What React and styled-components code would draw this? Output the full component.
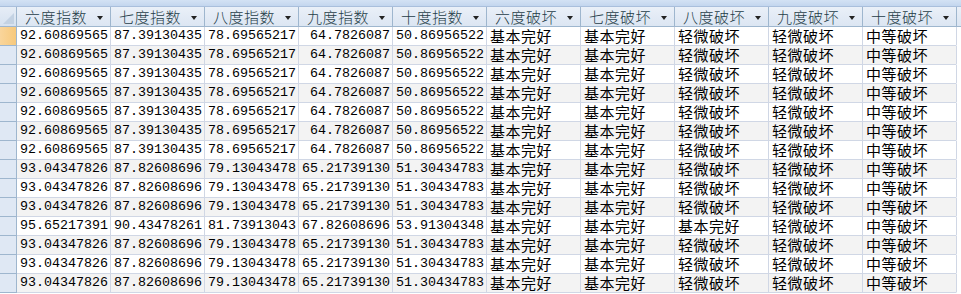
import React from "react";
import styled, { createGlobalStyle } from "styled-components";

const Global = createGlobalStyle`
  html, body { margin: 0; padding: 0; background: #ffffff; overflow: hidden; }
  #root { width: 961px; height: 294px; overflow: hidden; }
`;

const Sheet = styled.div`
  width: 961px;
  height: 294px;
  display: flex;
  flex-direction: column;
  background: #ffffff;
  overflow: hidden;
`;

const TopStrip = styled.div`
  height: 6px;
  flex: none;
  background: linear-gradient(#d3e2f4, #c3d6ee);
  border-bottom: 1px solid #a9bfdc;
`;

const Row = styled.div`
  display: flex;
  flex: none;
  height: ${(p) => (p.$head ? 20 : 19)}px;
  background: ${(p) => (p.$head ? "linear-gradient(#eaf0f8, #dbe5f2)" : p.$alt ? "#f3f3f3" : "#ffffff")};
`;

const Selector = styled.div`
  flex: none;
  position: relative;
  width: 17px;
  box-sizing: border-box;
  border-right: 1px solid #9eb6ce;
  border-bottom: 1px solid #9eb6ce;
  background: ${(p) =>
    p.$head
      ? "linear-gradient(#e6edf6, #d6e2f0)"
      : p.$active
      ? "linear-gradient(90deg, #f9d59b, #f7c97c)"
      : "#dfe8f4"};
`;

const Corner = styled.div`
  position: absolute;
  right: 2px;
  bottom: 2px;
  width: 0;
  height: 0;
  border-left: 11px solid transparent;
  border-bottom: 11px solid #c3d2e3;
`;

const HeadCell = styled.div`
  flex: none;
  width: 94px;
  box-sizing: border-box;
  border-right: 1px solid #9eb6ce;
  border-bottom: 1px solid #9eb6ce;
  display: flex;
  align-items: center;
  padding-left: 8px;
  padding-right: 7px;
  font-family: "Noto Sans CJK SC", sans-serif;
  font-size: 15px;
  font-weight: 300;
  color: #1f3d48;
  line-height: 16px;
`;

const HeadLabel = styled.span`
  flex: 1;
  white-space: nowrap;
  letter-spacing: 0.5px;
`;

const Arrow = styled.span`
  width: 0;
  height: 0;
  border-left: 3.5px solid transparent;
  border-right: 3.5px solid transparent;
  border-top: 4px solid #222222;
  margin-top: 2px;
`;

const Cell = styled.div`
  flex: none;
  width: 94px;
  box-sizing: border-box;
  border-right: 1px solid #d0d7e5;
  border-bottom: 1px solid #d0d7e5;
  display: flex;
  align-items: center;
  justify-content: ${(p) => (p.$num ? "flex-end" : "flex-start")};
  padding: ${(p) => (p.$num ? "0 2px 0 0" : "0 0 1px 3px")};
  font-family: ${(p) => (p.$num ? '"Liberation Mono", monospace' : '"Noto Sans CJK SC", sans-serif')};
  font-size: ${(p) => (p.$num ? "13.33px" : "15px")};
  letter-spacing: ${(p) => (p.$num ? "0" : "0.5px")};
  color: #000000;
  white-space: nowrap;
  line-height: 16px;
`;

const Filler = styled.div`
  flex: 1;
  border-left: 1px solid ${(p) => (p.$head ? "#9eb6ce" : "#d0d7e5")};
  margin-left: -1px;
  border-bottom: 1px solid ${(p) => (p.$head ? "#9eb6ce" : "#ffffff")};
  background: ${(p) => (p.$head ? "linear-gradient(#eaf0f8, #dbe5f2)" : "#ffffff")};
`;

const headers = ["六度指数", "七度指数", "八度指数", "九度指数", "十度指数", "六度破坏", "七度破坏", "八度破坏", "九度破坏", "十度破坏"];

const A = ["92.60869565", "87.39130435", "78.69565217", "64.7826087", "50.86956522", "基本完好", "基本完好", "轻微破坏", "轻微破坏", "中等破坏"];
const B = ["93.04347826", "87.82608696", "79.13043478", "65.21739130", "51.30434783", "基本完好", "基本完好", "轻微破坏", "轻微破坏", "中等破坏"];
const C = ["95.65217391", "90.43478261", "81.73913043", "67.82608696", "53.91304348", "基本完好", "基本完好", "基本完好", "轻微破坏", "中等破坏"];

const rows = [A, A, A, A, A, A, A, B, B, B, C, B, B, B];

export default function App() {
  return (
    <Sheet>
      <Global />
      <TopStrip />
      <Row $head>
        <Selector $head>
          <Corner />
        </Selector>
        {headers.map((h) => (
          <HeadCell key={h}>
            <HeadLabel>{h}</HeadLabel>
            <Arrow />
          </HeadCell>
        ))}
        <Filler $head />
      </Row>
      {rows.map((r, i) => (
        <Row key={i} $alt={i % 2 === 1}>
          <Selector $active={i === 0} />
          {r.map((v, j) => (
            <Cell key={j} $num={j < 5}>
              {v}
            </Cell>
          ))}
          <Filler />
        </Row>
      ))}
    </Sheet>
  );
}
